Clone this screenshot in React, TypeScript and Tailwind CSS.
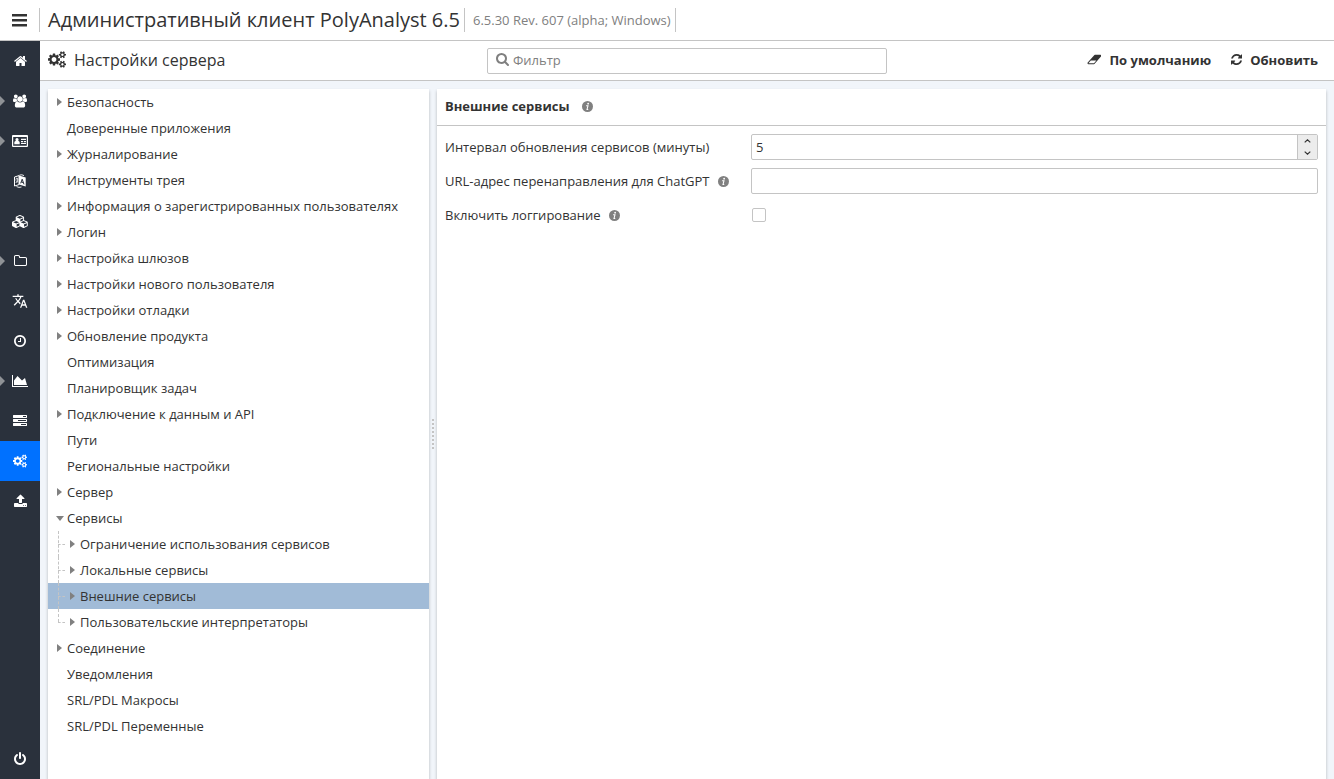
import { useState } from "react"
import type { ReactNode } from "react"
import { MdTranslate } from "react-icons/md"
import { clsx } from "clsx"

type IconProps = { className?: string }

const glyph = (viewBox: string, d: string) =>
  function Glyph({ className }: IconProps) {
    return (
      <svg viewBox={viewBox} fill="currentColor" aria-hidden="true" className={className}>
        <path d={d} />
      </svg>
    )
  }

const BarsIcon = glyph("0 0 15 13", "M0 0h15v2.6H0zM0 5h15v2.6H0zM0 10h15v2.6H0z")
const HomeIcon = glyph(
  "64 0 1664 1792",
  "M1472 992v480q0 26-19 45t-45 19h-384v-384h-256v384h-384q-26 0-45-19t-19-45v-480q0-1 .5-3t.5-3l575-474 575 474q1 2 1 6zm223-69l-62 74q-8 9-21 11h-3q-13 0-21-7l-692-577-692 577q-12 8-24 7-13-2-21-11l-62-74q-8-10-7-23.5t11-21.5l719-599q32-26 76-26t76 26l244 204v-195q0-14 9-23t23-9h192q14 0 23 9t9 23v408l219 182q10 8 11 21.5t-7 23.5z",
)
const UsersIcon = glyph(
  "64 0 1920 1792",
  "M657 896q-162 5-265 128h-134q-82 0-138-40.5t-56-118.5q0-353 124-353 6 0 43.5 21t97.5 42.5 119 21.5q67 0 133-23-5 37-5 66 0 159 81 298zm1071 637q0 120-73 189.5t-194 69.5h-874q-121 0-194-69.5t-73-189.5q0-53 3.5-103.5t14-109 26.5-108.5 43-97.5 62-81 85.5-53.5 111.5-20q10 0 43 21.5t73 48 107 48 135 21.5 135-21.5 107-48 73-48 43-21.5q61 0 111.5 20t85.5 53.5 62 81 43 97.5 26.5 108.5 14 109 3.5 103.5zm-1024-1277q0 106-75 181t-181 75-181-75-75-181 75-181 181-75 181 75 75 181zm704 384q0 159-112.5 271.5t-271.5 112.5-271.5-112.5-112.5-271.5 112.5-271.5 271.5-112.5 271.5 112.5 112.5 271.5zm576 225q0 78-56 118.5t-138 40.5h-134q-103-123-265-128 81-139 81-298 0-29-5-66 66 23 133 23 59 0 119-21.5t97.5-42.5 43.5-21q124 0 124 353zm-128-609q0 106-75 181t-181 75-181-75-75-181 75-181 181-75 181 75 75 181z",
)
const CogsIcon = glyph(
  "-64 0 1920 1792",
  "M832 896q0-106-75-181t-181-75-181 75-75 181 75 181 181 75 181-75 75-181zm768 512q0-52-38-90t-90-38-90 38-38 90q0 53 37.5 90.5t90.5 37.5 90.5-37.5 37.5-90.5zm0-1024q0-52-38-90t-90-38-90 38-38 90q0 53 37.5 90.5t90.5 37.5 90.5-37.5 37.5-90.5zm-384 421v185q0 10-7 19.5t-16 10.5l-155 24q-11 35-32 76 34 48 90 115 7 11 7 20 0 12-7 19-23 30-82.5 89.5t-78.5 59.5q-11 0-21-7l-115-90q-37 19-77 31-11 108-23 155-7 24-30 24h-186q-11 0-20-7.5t-10-17.5l-23-153q-34-10-75-31l-118 89q-7 7-20 7-11 0-21-8-144-133-144-160 0-9 7-19 10-14 41-53t47-61q-23-44-35-82l-152-24q-10-1-17-9.5t-7-19.5v-185q0-10 7-19.5t16-10.5l155-24q11-35 32-76-34-48-90-115-7-11-7-20 0-12 7-20 22-30 82-89t79-59q11 0 21 7l115 90q34-18 77-32 11-108 23-154 7-24 30-24h186q11 0 20 7.5t10 17.5l23 153q34 10 75 31l118-89q8-7 20-7 11 0 21 8 144 133 144 160 0 8-7 19-12 16-42 54t-45 60q23 48 34 82l152 23q10 2 17 10.5t7 19.5zm640 533v140q0 16-149 31-12 27-30 52 51 113 51 138 0 4-4 7-122 71-124 71-8 0-46-47t-52-68q-20 2-30 2t-30-2q-14 21-52 68t-46 47q-2 0-124-71-4-3-4-7 0-25 51-138-18-25-30-52-149-15-149-31v-140q0-16 149-31 13-29 30-52-51-113-51-138 0-4 4-7 4-2 35-20t59-34 30-16q8 0 46 46.5t52 67.5q20-2 30-2t30 2q51-71 92-112l6-2q4 0 124 70 4 3 4 7 0 25-51 138 17 23 30 52 149 15 149 31zm0-1024v140q0 16-149 31-12 27-30 52 51 113 51 138 0 4-4 7-122 71-124 71-8 0-46-47t-52-68q-20 2-30 2t-30-2q-14 21-52 68t-46 47q-2 0-124-71-4-3-4-7 0-25 51-138-18-25-30-52-149-15-149-31v-140q0-16 149-31 13-29 30-52-51-113-51-138 0-4 4-7 4-2 35-20t59-34 30-16q8 0 46 46.5t52 67.5q20-2 30-2t30 2q51-71 92-112l6-2q4 0 124 70 4 3 4 7 0 25-51 138 17 23 30 52 149 15 149 31z",
)
const CubesIcon = glyph(
  "0 0 2304 1792",
  "M640 1632l384-192v-314l-384 164v342zm-64-454l404-173-404-173-404 173zm1088 454l384-192v-314l-384 164v342zm-64-454l404-173-404-173-404 173zm-448-293l384-165v-266l-384 164v267zm-64-379l441-189-441-189-441 189zm1088 518v416q0 36-19 67t-52 47l-448 224q-25 14-57 14t-57-14l-448-224q-4-2-7-4-2 2-7 4l-448 224q-25 14-57 14t-57-14l-448-224q-33-16-52-47t-19-67v-416q0-38 21.5-70t56.5-48l434-186v-400q0-38 21.5-70t56.5-48l448-192q23-10 50-10t50 10l448 192q35 16 56.5 48t21.5 70v400l434 186q36 16 57 48t21 70z",
)
const FolderIcon = glyph(
  "64 0 1664 1792",
  "M1600 1312v-704q0-40-28-68t-68-28h-704q-40 0-68-28t-28-68v-64q0-40-28-68t-68-28h-320q-40 0-68 28t-28 68v960q0 40 28 68t68 28h1216q40 0 68-28t28-68zm128-704v704q0 92-66 158t-158 66h-1216q-92 0-158-66t-66-158v-960q0-92 66-158t158-66h320q92 0 158 66t66 158v32h672q92 0 158 66t66 158z",
)
const ClockIcon = glyph(
  "128 0 1536 1792",
  "M1024 544v448q0 14-9 23t-23 9h-320q-14 0-23-9t-9-23v-64q0-14 9-23t23-9h224v-352q0-14 9-23t23-9h64q14 0 23 9t9 23zm416 352q0-148-73-273t-198-198-273-73-273 73-198 198-73 273 73 273 198 198 273 73 273-73 198-198 73-273zm224 0q0 209-103 385.5t-279.5 279.5-385.5 103-385.5-103-279.5-279.5-103-385.5 103-385.5 279.5-279.5 385.5-103 385.5 103 279.5 279.5 103 385.5z",
)
const ChartIcon = glyph(
  "0 0 2048 1792",
  "M2048 1536v128h-2048v-1536h128v1408h1920zm-384-1024l256 896h-1664v-576l448-576 576 576z",
)
const TasksIcon = glyph(
  "0 0 1792 1792",
  "M1024 1408h640v-128h-640v128zm-384-512h1024v-128h-1024v128zm640-512h384v-128h-384v128zm512 832v256q0 26-19 45t-45 19h-1664q-26 0-45-19t-19-45v-256q0-26 19-45t45-19h1664q26 0 45 19t19 45zm0-512v256q0 26-19 45t-45 19h-1664q-26 0-45-19t-19-45v-256q0-26 19-45t45-19h1664q26 0 45 19t19 45zm0-512v256q0 26-19 45t-45 19h-1664q-26 0-45-19t-19-45v-256q0-26 19-45t45-19h1664q26 0 45 19t19 45z",
)
const UploadIcon = glyph(
  "64 0 1664 1792",
  "M1344 1472q0-26-19-45t-45-19-45 19-19 45 19 45 45 19 45-19 19-45zm256 0q0-26-19-45t-45-19-45 19-19 45 19 45 45 19 45-19 19-45zm128-224v320q0 40-28 68t-68 28h-1472q-40 0-68-28t-28-68v-320q0-40 28-68t68-28h427q21 56 70.5 92t110.5 36h256q61 0 110.5-36t70.5-92h427q40 0 68 28t28 68zm-325-648q-17 40-59 40h-256v448q0 26-19 45t-45 19h-256q-26 0-45-19t-19-45v-448h-256q-42 0-59-40-17-39 14-69l448-448q18-19 45-19t45 19l448 448q31 30 14 69z",
)
const PowerIcon = glyph(
  "128 0 1536 1792",
  "M1664 896q0 156-61 298t-164 245-245 164-298 61-298-61-245-164-164-245-61-298q0-182 80.5-343t226.5-270q43-32 95.5-25t83.5 50q32 42 24.5 94.5t-49.5 84.5q-98 74-151.5 181t-53.5 228q0 104 40.5 198.5t109.5 163.5 163.5 109.5 198.5 40.5 198.5-40.5 163.5-109.5 109.5-163.5 40.5-198.5q0-121-53.5-228t-151.5-181q-42-32-49.5-84.5t24.5-94.5q31-43 84-50t95 25q146 109 226.5 270t80.5 343zm-640-768v640q0 52-38 90t-90 38-90-38-38-90v-640q0-52 38-90t90-38 90 38 38 90z",
)
const EraserIcon = glyph(
  "0 0 2048 1792",
  "M960 1408l336-384h-768l-336 384h768zm1013-1077q15 34 9.5 71.5t-30.5 65.5l-896 1024q-38 44-96 44h-768q-38 0-69.5-20.5t-47.5-54.5q-15-34-9.5-71.5t30.5-65.5l896-1024q38-44 96-44h768q38 0 69.5 20.5t47.5 54.5z",
)
const RefreshIcon = glyph(
  "128 0 1536 1792",
  "M1639 1056q0 5-1 7-64 268-268 434.5t-478 166.5q-146 0-282.5-55t-243.5-157l-129 129q-19 19-45 19t-45-19-19-45v-448q0-26 19-45t45-19h448q26 0 45 19t19 45-19 45l-137 137q71 66 161 102t187 36q134 0 250-65t186-179q11-17 53-117 8-23 30-23h192q13 0 22.5 9.5t9.5 22.5zm25-800v448q0 26-19 45t-45 19h-448q-26 0-45-19t-19-45 19-45l138-138q-148-137-349-137-134 0-250 65t-186 179q-11 17-53 117-8 23-30 23h-199q-13 0-22.5-9.5t-9.5-22.5v-7q65-268 270-434.5t480-166.5q146 0 284 55.5t245 156.5l130-129q19-19 45-19t45 19 19 45z",
)
const SearchIcon = glyph(
  "64 128 1664 1664",
  "M1216 832q0-185-131.5-316.5t-316.5-131.5-316.5 131.5-131.5 316.5 131.5 316.5 316.5 131.5 316.5-131.5 131.5-316.5zm512 832q0 52-38 90t-90 38q-54 0-90-38l-343-342q-179 124-399 124-143 0-273.5-55.5t-225-150-150-225-55.5-273.5 55.5-273.5 150-225 225-150 273.5-55.5 273.5 55.5 225 150 150 225 55.5 273.5q0 220-124 399l343 343q37 37 37 90z",
)

const CardIcon = ({ className }: IconProps) => (
  <svg viewBox="0 0 16 12" fill="currentColor" aria-hidden="true" className={className}>
    <path fillRule="evenodd" d="M1 0h14a1 1 0 0 1 1 1v10a1 1 0 0 1-1 1H1a1 1 0 0 1-1-1V1a1 1 0 0 1 1-1zm.2 2v8.8h13.6V2z" />
    <circle cx="5" cy="4.7" r="1.6" />
    <path d="M2.3 9.2V7.6q0-1.4 1.3-1.5h2.8q1.3.1 1.3 1.5v1.6zM9 3.8h5v1.3H9zM9 6h2.2v1.2H9zM12 6h2v1.2h-2zM9 8h5v1.1H9z" />
  </svg>
)

const DictionaryIcon = ({ className }: IconProps) => (
  <svg viewBox="0 0 14 14" fill="none" stroke="currentColor" aria-hidden="true" className={className}>
    <path d="M1.5 3 6 1.6v9L1.5 12z" strokeWidth="1" />
    <path d="M2.5 5.2 5 4.5M3.8 3.7v1.1M2.8 9q1.8-1.5 2-4M3 6.5q.6 1.3 2 1.6" strokeWidth=".8" />
    <path d="M6 1.5 12.7 3.6v9L6 10.5z" fill="currentColor" stroke="none" />
    <path d="M7.7 9.3 9.2 5.2l1.8 5.2M8.3 8l2 .6" stroke="#2a313c" strokeWidth="1" />
    <path d="M6.5 1.1Q9 .2 11 1.6M3.5 12.6q2.5 1.4 5 .4" strokeWidth=".9" />
  </svg>
)

const InfoIcon = () => (
  <svg viewBox="0 0 12 12" role="img" aria-label="Справка" className="size-[11px] shrink-0">
    <circle cx="6" cy="6" r="6" fill="#808080" />
    <circle cx="6.7" cy="2.9" r="1" fill="#fff" />
    <path d="M4.5 5.2h2L5.5 9.2h1.3" fill="none" stroke="#fff" strokeWidth="1.2" />
  </svg>
)

const ChevronIcon = ({ className }: IconProps) => (
  <svg viewBox="0 0 7 4" fill="none" stroke="currentColor" strokeWidth="1.2" aria-hidden="true" className={className}>
    <path d="M.7 3.4 3.5.8l2.8 2.6" />
  </svg>
)

const NAV = [
  { label: "Главная", Icon: HomeIcon, size: "h-[14px]" },
  { label: "Пользователи", Icon: UsersIcon, size: "h-[14px] w-[14px]", expandable: true },
  { label: "Лицензии", Icon: CardIcon, size: "h-[12px]", expandable: true },
  { label: "Словари", Icon: DictionaryIcon, size: "h-[14px]" },
  { label: "Модули", Icon: CubesIcon, size: "h-[13px]" },
  { label: "Файлы", Icon: FolderIcon, size: "h-[14px]", expandable: true },
  { label: "Перевод", Icon: MdTranslate, size: "h-[16px] w-[16px]" },
  { label: "Расписание", Icon: ClockIcon, size: "h-[14px]" },
  { label: "Статистика", Icon: ChartIcon, size: "h-[14px]", expandable: true },
  { label: "Задачи", Icon: TasksIcon, size: "h-[14px]" },
  { label: "Настройки сервера", Icon: CogsIcon, size: "h-[14px] w-[14px]", active: true },
  { label: "Загрузка", Icon: UploadIcon, size: "h-[14px]" },
]

type Node = { label: string; state?: "closed" | "open"; children?: Node[] }

const TREE: Node[] = [
  { label: "Безопасность", state: "closed" },
  { label: "Доверенные приложения" },
  { label: "Журналирование", state: "closed" },
  { label: "Инструменты трея" },
  { label: "Информация о зарегистрированных пользователях", state: "closed" },
  { label: "Логин", state: "closed" },
  { label: "Настройка шлюзов", state: "closed" },
  { label: "Настройки нового пользователя", state: "closed" },
  { label: "Настройки отладки", state: "closed" },
  { label: "Обновление продукта", state: "closed" },
  { label: "Оптимизация" },
  { label: "Планировщик задач" },
  { label: "Подключение к данным и API", state: "closed" },
  { label: "Пути" },
  { label: "Региональные настройки" },
  { label: "Сервер", state: "closed" },
  {
    label: "Сервисы",
    state: "open",
    children: [
      { label: "Ограничение использования сервисов", state: "closed" },
      { label: "Локальные сервисы", state: "closed" },
      { label: "Внешние сервисы", state: "closed" },
      { label: "Пользовательские интерпретаторы", state: "closed" },
    ],
  },
  { label: "Соединение", state: "closed" },
  { label: "Уведомления" },
  { label: "SRL/PDL Макросы" },
  { label: "SRL/PDL Переменные" },
]

const Arrow = ({ state }: { state?: Node["state"] }) => (
  <span className="flex w-[11px] shrink-0 items-center">
    {state === "closed" && (
      <svg viewBox="0 0 5 8" className="ml-px h-2 w-[5px] fill-[#808080]" aria-hidden="true">
        <path d="M0 0l5 4-5 4z" />
      </svg>
    )}
    {state === "open" && (
      <svg viewBox="0 0 8 5" className="h-[5px] w-2 fill-[#808080]" aria-hidden="true">
        <path d="M0 0h8L4 5z" />
      </svg>
    )}
  </span>
)

type TreeProps = { nodes: Node[]; nested?: boolean; selected: string; onSelect: (label: string) => void }

const Tree = ({ nodes, nested, selected, onSelect }: TreeProps) => (
  <ul>
    {nodes.map((node, index) => (
      <li key={node.label} className="relative">
        <button
          type="button"
          onClick={() => onSelect(node.label)}
          className={clsx(
            "flex h-[26px] w-full items-center text-left whitespace-nowrap",
            nested ? "pl-[21px]" : "pl-2",
            node.label === selected && "bg-[#a1bbd7]",
          )}
        >
          <Arrow state={node.state} />
          {node.label}
        </button>
        {nested && (
          <>
            <span
              className={clsx(
                "absolute top-0 left-[10px] border-l border-dashed border-[#c4c4c4]",
                index === nodes.length - 1 ? "h-[13px]" : "h-full",
              )}
            />
            <span className="absolute top-[13px] left-[10px] w-[7px] border-t border-dashed border-[#c4c4c4]" />
          </>
        )}
        {node.children && <Tree nodes={node.children} nested selected={selected} onSelect={onSelect} />}
      </li>
    ))}
  </ul>
)

const Row = ({ id, label, info, children }: { id: string; label: string; info?: boolean; children: ReactNode }) => (
  <div className="grid min-h-[26px] grid-cols-[298px_1fr] items-center gap-2">
    <div className="flex items-center gap-2">
      <label htmlFor={id}>{label}</label>
      {info && <InfoIcon />}
    </div>
    {children}
  </div>
)

const App = () => {
  const [selected, setSelected] = useState("Внешние сервисы")
  const [interval, setInterval] = useState(5)

  return (
    <div className="flex h-screen flex-col bg-white font-['Open_Sans',sans-serif] text-[13px] leading-5 text-[#333]">
      <header className="flex h-[41px] shrink-0 items-center border-b border-[#c4c4c4]">
        <button type="button" aria-label="Меню" className="flex w-[39px] justify-center">
          <BarsIcon className="h-[13px] w-[15px]" />
        </button>
        <h1 className="flex h-6 items-center border-l border-[#c4c4c4] pr-1 pl-2 text-[20px] whitespace-nowrap">
          Административный клиент PolyAnalyst 6.5
        </h1>
        <span className="flex h-6 items-center border-x border-[#c4c4c4] pr-1 pl-2 whitespace-nowrap text-[#808080]">
          6.5.30 Rev. 607 (alpha; Windows)
        </span>
      </header>

      <div className="flex min-h-0 flex-1">
        <nav className="flex w-10 shrink-0 flex-col justify-between bg-[#2a313c] text-white">
          <div>
            {NAV.map(({ label, Icon, size, expandable, active }) => (
              <a
                key={label}
                href="#"
                aria-label={label}
                className={clsx("relative flex h-10 items-center justify-center", active && "bg-[#0071ff]")}
              >
                {expandable && (
                  <svg viewBox="0 0 5 10" className="absolute left-0 h-[10px] w-[5px] fill-[#8f9296]" aria-hidden="true">
                    <path d="M0 0l5 5-5 5z" />
                  </svg>
                )}
                <Icon className={size} />
              </a>
            ))}
          </div>
          <a href="#" aria-label="Выход" className="flex h-10 items-center justify-center">
            <PowerIcon className="h-[14px]" />
          </a>
        </nav>

        <div className="flex min-w-0 flex-1 flex-col">
          <div className="grid h-10 shrink-0 grid-cols-[1fr_400px_1fr] items-center border-b border-[#c4c4c4]">
            <h2 className="flex items-center gap-2 pb-0.5 pl-2 text-[16px]">
              <CogsIcon className="h-[17px] w-[18px]" />
              Настройки сервера
            </h2>
            <label className="flex h-[26px] items-center gap-1 rounded-xs border border-[#c4c4c4] px-2 pb-0.5 text-[#808080]">
              <SearchIcon className="size-[13px] shrink-0" />
              <input
                type="text"
                aria-label="Фильтр"
                placeholder="Фильтр"
                className="min-w-0 flex-1 outline-none placeholder:text-[#808080]"
              />
            </label>
            <div className="flex justify-end gap-5 pr-4 pb-0.5 font-bold">
              <button type="button" className="flex items-center gap-2">
                <EraserIcon className="h-[13px]" />
                По умолчанию
              </button>
              <button type="button" className="flex items-center gap-2">
                <RefreshIcon className="h-[13px]" />
                Обновить
              </button>
            </div>
          </div>

          <main className="flex min-h-0 flex-1 bg-[#f1f5fa] px-2 pt-2">
            <aside className="w-[381px] shrink-0 overflow-hidden bg-white shadow-[0_2px_3px_rgba(0,0,0,0.25)]">
              <Tree nodes={TREE} selected={selected} onSelect={setSelected} />
            </aside>

            <div role="separator" className="flex w-2 shrink-0 flex-col items-center justify-center gap-[2px]">
              {Array.from({ length: 8 }, (_, i) => (
                <span key={i} className="size-[2px] bg-[#c4c4c4]" />
              ))}
            </div>

            <section className="min-w-0 flex-1 bg-white shadow-[0_2px_3px_rgba(0,0,0,0.25)]">
              <h3 className="flex h-[37px] items-center gap-3 border-b border-[#c4c4c4] px-2 pb-0.5 font-bold">
                Внешние сервисы
                <InfoIcon />
              </h3>
              <div className="flex flex-col gap-2 p-2">
                <Row id="interval" label="Интервал обновления сервисов (минуты)">
                  <div className="flex h-[26px] rounded-xs border border-[#c4c4c4]">
                    <input
                      id="interval"
                      type="text"
                      inputMode="numeric"
                      value={interval}
                      onChange={(e) => setInterval(Number(e.target.value) || 0)}
                      className="min-w-0 flex-1 px-1 outline-none"
                    />
                    <div className="flex w-5 flex-col border-l border-[#c4c4c4] bg-[#ececec]">
                      <button
                        type="button"
                        aria-label="Увеличить"
                        className="flex flex-1 items-center justify-center"
                        onClick={() => setInterval(interval + 1)}
                      >
                        <ChevronIcon className="h-1 w-[7px]" />
                      </button>
                      <button
                        type="button"
                        aria-label="Уменьшить"
                        className="flex flex-1 items-center justify-center"
                        onClick={() => setInterval(interval - 1)}
                      >
                        <ChevronIcon className="h-1 w-[7px] rotate-180" />
                      </button>
                    </div>
                  </div>
                </Row>
                <Row id="redirect" label="URL-адрес перенаправления для ChatGPT" info>
                  <input
                    id="redirect"
                    type="text"
                    className="h-[26px] w-full rounded-xs border border-[#c4c4c4] px-1 outline-none"
                  />
                </Row>
                <Row id="logging" label="Включить логгирование" info>
                  <input
                    id="logging"
                    type="checkbox"
                    className="ml-px size-[14px] appearance-none rounded-xs border border-[#c4c4c4] checked:bg-[#0071ff]"
                  />
                </Row>
              </div>
            </section>
          </main>
        </div>
      </div>
    </div>
  )
}

export default App
